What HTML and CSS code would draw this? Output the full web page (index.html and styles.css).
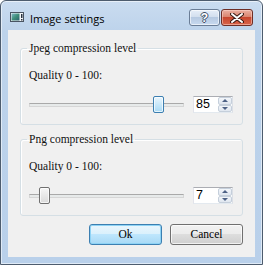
FILE: index.html
```html
<!DOCTYPE html>
<html lang="en">
<head>
<meta charset="UTF-8">
<link rel="stylesheet" href="styles.css">
<title>Image settings</title>
</head>
<body>
<div class="window">
  <div class="titlebar">
    <svg class="app-icon" width="14" height="10" viewBox="0 0 14 10">
      <defs>
        <linearGradient id="pic" x1="0" y1="0" x2="1" y2="1">
          <stop offset="0" stop-color="#7fb8c8"/>
          <stop offset="0.5" stop-color="#3f8f7a"/>
          <stop offset="1" stop-color="#2b5f6e"/>
        </linearGradient>
      </defs>
      <rect x="0.5" y="0.5" width="13" height="9" fill="#f4f6f8" stroke="#4a5563"/>
      <rect x="1.5" y="1.5" width="8" height="7" fill="url(#pic)"/>
      <rect x="11" y="2" width="1.5" height="4" fill="#2a3340"/>
      <rect x="11" y="7" width="1.5" height="1.5" fill="#2a3340"/>
    </svg>
    <span class="title">Image settings</span>
    <div class="caption-buttons">
      <div class="cap-btn help">?</div>
      <div class="cap-btn close">
        <svg width="14" height="10" viewBox="0 0 14 10">
          <path d="M2 1 L12 9 M12 1 L2 9" stroke="#3a1a14" stroke-width="4" stroke-linecap="round"/>
          <path d="M2 1 L12 9 M12 1 L2 9" stroke="#fff" stroke-width="2" stroke-linecap="round"/>
        </svg>
      </div>
    </div>
  </div>

  <div class="client">
    <fieldset class="group">
      <legend>Jpeg compression level</legend>
      <div class="label">Quality 0 - 100:</div>
      <div class="slider-row">
        <div class="slider">
          <div class="track"></div>
          <div class="handle focused" style="left: 124px"></div>
        </div>
        <div class="spinbox">
          <span class="value">85</span>
          <div class="spin">
            <div class="spin-btn"><span class="arrow up"></span></div>
            <div class="spin-btn"><span class="arrow down"></span></div>
          </div>
        </div>
      </div>
    </fieldset>

    <fieldset class="group second">
      <legend>Png compression level</legend>
      <div class="label">Quality 0 - 100:</div>
      <div class="slider-row">
        <div class="slider">
          <div class="track"></div>
          <div class="handle" style="left: 10px"></div>
        </div>
        <div class="spinbox">
          <span class="value">7</span>
          <div class="spin">
            <div class="spin-btn"><span class="arrow up"></span></div>
            <div class="spin-btn"><span class="arrow down"></span></div>
          </div>
        </div>
      </div>
    </fieldset>

    <div class="buttons">
      <div class="button default">Ok</div>
      <div class="button">Cancel</div>
    </div>
  </div>
</div>
</body>
</html>
```

FILE: styles.css
```css
body {
  margin: 0;
  background: #fff;
}

.window {
  width: 263px;
  height: 265px;
  box-sizing: border-box;
  border: 1px solid #4d5c6e;
  border-radius: 6px 6px 0 0;
  background: linear-gradient(#cadcf0, #bdd3eb 30px, #b9d0ea);
  box-shadow: inset 0 0 0 1px rgba(255, 255, 255, 0.55);
  padding: 0 7px 7px 7px;
  display: flex;
  flex-direction: column;
}

.titlebar {
  height: 29px;
  display: flex;
  align-items: flex-start;
}

.app-icon {
  margin: 11px 0 0 2px;
}

.title {
  margin: 10px 0 0 6px;
  font: 11px/16px "Open Sans", sans-serif;
  color: #000;
}

.caption-buttons {
  margin: 8px 2px 0 auto;
  display: flex;
  gap: 1px;
}

.cap-btn {
  width: 31px;
  height: 17px;
  box-sizing: border-box;
  border-radius: 3px;
  display: flex;
  justify-content: center;
  align-items: center;
}

.cap-btn.help {
  border: 1px solid #6a7d96;
  background: linear-gradient(#e6eef8 0%, #d3dfee 45%, #b6c9e1 50%, #c8daf0 100%);
  box-shadow: inset 0 0 0 1px rgba(255, 255, 255, 0.6);
  font: bold 12px/1 "Liberation Sans", sans-serif;
  color: #fff;
  text-shadow: -1px 0 #3d4f66, 1px 0 #3d4f66, 0 -1px #3d4f66, 0 1px #3d4f66;
}

.cap-btn.close {
  width: 32px;
  border: 1px solid #6e2e26;
  background: linear-gradient(#eab0a2 0%, #da8570 45%, #c7472f 50%, #d8644a 100%);
  box-shadow: inset 0 0 0 1px rgba(255, 220, 210, 0.5);
}

.client {
  flex: 1;
  background: #f0f0f0;
  padding: 11px 12px 12px 12px;
  display: flex;
  flex-direction: column;
}

.group {
  margin: 0;
  padding: 0 9px 11px 8px;
  border: 1px solid #d5dfe5;
  border-radius: 3px;
  box-shadow: inset 1px 1px 0 #fff;
  min-width: 0;
}

.group.second {
  margin-top: 7px;
}

.group legend {
  margin-left: -2px;
  padding: 0 2px;
  font: 11.5px/14px "Liberation Serif", serif;
  color: #111;
}

.label {
  margin-top: 13px;
  font: 11.5px/14px "Liberation Serif", serif;
  color: #111;
}

.slider-row {
  margin-top: 14px;
  height: 17px;
  display: flex;
  align-items: center;
  gap: 9px;
}

.slider {
  position: relative;
  width: 155px;
  height: 17px;
  display: flex;
  align-items: center;
}

.track {
  width: 100%;
  height: 4px;
  box-sizing: border-box;
  border: 1px solid #d6d6d6;
  border-top-color: #a9a9a9;
  background: #e7eaea;
}

.handle {
  position: absolute;
  top: 0;
  width: 11px;
  height: 17px;
  box-sizing: border-box;
  border: 1px solid #707070;
  border-radius: 2px;
  background: linear-gradient(#f6f6f6, #dadada);
  box-shadow: inset 0 0 0 1px rgba(255, 255, 255, 0.7);
}

.handle.focused {
  border-color: #3c7fb1;
  background: linear-gradient(#eaf6fd, #a7d9f5);
}

.spinbox {
  width: 40px;
  height: 17px;
  box-sizing: border-box;
  border: 1px solid #abadb3;
  border-left-color: #e2e3ea;
  border-right-color: #dbdfe6;
  border-bottom-color: #e3e9ef;
  background: #fff;
  display: flex;
  align-items: center;
}

.value {
  flex: 1;
  padding-left: 2px;
  font: 12.5px/15px "Liberation Sans", sans-serif;
  color: #000;
}

.spin {
  width: 14px;
  height: 15px;
  display: flex;
  flex-direction: column;
}

.spin-btn {
  flex: 1;
  box-sizing: border-box;
  border: 1px solid #c5cfdb;
  border-radius: 2px;
  background: linear-gradient(#f3f6fa, #dfe6ef);
  display: flex;
  justify-content: center;
  align-items: center;
}

.arrow {
  width: 0;
  height: 0;
  border-left: 3px solid transparent;
  border-right: 3px solid transparent;
}

.arrow.up {
  border-bottom: 3px solid #4d6185;
}

.arrow.down {
  border-top: 3px solid #4d6185;
}

.buttons {
  margin-top: 8px;
  display: flex;
  justify-content: flex-end;
  gap: 8px;
}

.button {
  width: 73px;
  height: 21px;
  box-sizing: border-box;
  border: 1px solid #707070;
  border-radius: 3px;
  background: linear-gradient(#f2f2f2 0%, #ebebeb 50%, #dddddd 50%, #cfcfcf 100%);
  box-shadow: inset 0 0 0 1px rgba(255, 255, 255, 0.7);
  font: 11.5px/19px "Liberation Serif", serif;
  color: #000;
  text-align: center;
}

.button.default {
  border-color: #3c7fb1;
  background: linear-gradient(#eaf6fd 0%, #d9f0fc 50%, #bee6fd 50%, #a7d9f5 100%);
  box-shadow: inset 0 0 0 1px #8ed3f5;
}
```
